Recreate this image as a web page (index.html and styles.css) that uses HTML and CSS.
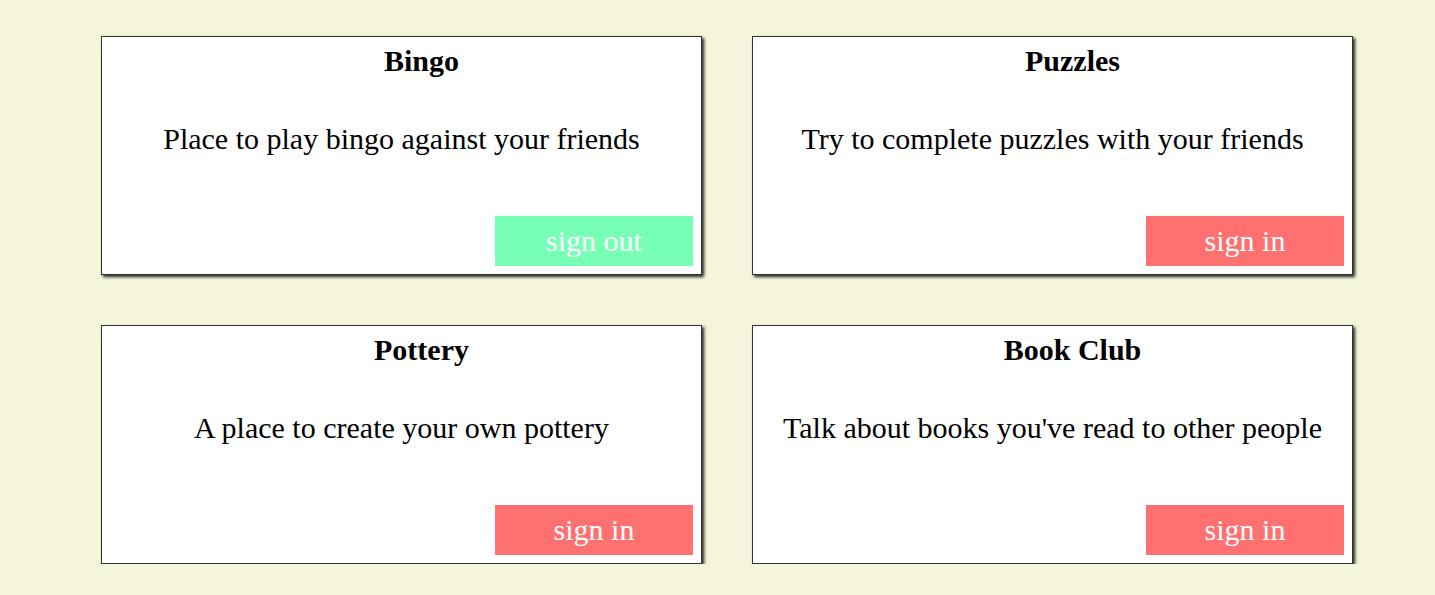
FILE: index.html
```html
<!DOCTYPE html>
<html>
<head>
<meta charset="utf-8">
<link rel="stylesheet" href="styles.css">
</head>
<body>
<div class="grid">
  <div class="card">
    <h2 class="title">Bingo</h2>
    <p class="desc">Place to play bingo against your friends</p>
    <button class="btn btn-out">sign out</button>
  </div>
  <div class="card">
    <h2 class="title">Puzzles</h2>
    <p class="desc">Try to complete puzzles with your friends</p>
    <button class="btn btn-in">sign in</button>
  </div>
  <div class="card">
    <h2 class="title">Pottery</h2>
    <p class="desc">A place to create your own pottery</p>
    <button class="btn btn-in">sign in</button>
  </div>
  <div class="card">
    <h2 class="title">Book Club</h2>
    <p class="desc">Talk about books you've read to other people</p>
    <button class="btn btn-in">sign in</button>
  </div>
</div>
</body>
</html>
```
FILE: styles.css
```css
html, body {
  margin: 0;
  padding: 0;
  background: #f5f5dc;
  font-family: "Liberation Serif", "Times New Roman", serif;
}
.grid {
  display: grid;
  grid-template-columns: 601px 601px;
  column-gap: 50px;
  row-gap: 50px;
  padding: 36px 0 0 101px;
}
.card {
  box-sizing: border-box;
  height: 239px;
  background: #fff;
  border: 1px solid #333;
  box-shadow: 2px 2px 3px #222;
  display: flex;
  flex-direction: column;
  align-items: center;
  padding: 0 8px 8px 8px;
}
.title {
  margin: 7px 0 0 40px;
  font-size: 30px;
  font-weight: bold;
  line-height: 34px;
  color: #000;
}
.desc {
  margin: 44px 0 0 0;
  font-size: 30px;
  line-height: 34px;
  color: #000;
}
.btn {
  margin-top: auto;
  align-self: flex-end;
  width: 198px;
  height: 50px;
  border: none;
  color: #fff;
  font-family: "Liberation Serif", "Times New Roman", serif;
  font-size: 30px;
  padding: 0;
}
.btn-out { background: #76ffb5; }
.btn-in { background: #ff7070; }
```
